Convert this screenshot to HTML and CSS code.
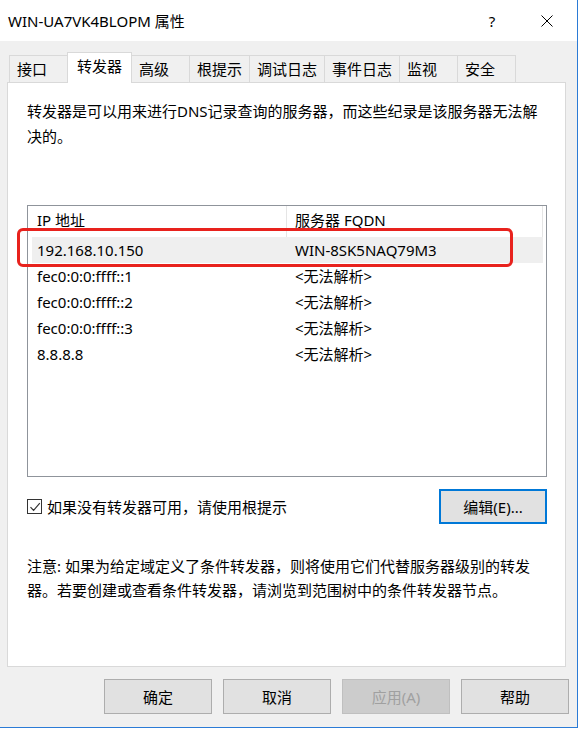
FILE: index.html
```html
<!DOCTYPE html>
<html lang="zh-CN">

<head>
    <meta charset="UTF-8">
    <meta name="viewport" content="width=device-width, initial-scale=1.0">
    <title>WIN-UA7VK4BLOPM 属性</title>
    <link rel="stylesheet" href="styles.css">
</head>

<body>
    <div class="window">
        <div class="titlebar">
            <span class="title">WIN-UA7VK4BLOPM 属性</span>
            <span class="title-help">?</span>
            <span class="title-close">
                <svg width="12" height="12" viewBox="0 0 12 12">
                    <path d="M0.5 0.5 L11.5 11.5 M11.5 0.5 L0.5 11.5" stroke="#000" stroke-width="1" fill="none" />
                </svg>
            </span>
        </div>

        <div class="dialog-body">
            <div class="tabs">
                <div class="tab">接口</div>
                <div class="tab active">转发器</div>
                <div class="tab">高级</div>
                <div class="tab">根提示</div>
                <div class="tab">调试日志</div>
                <div class="tab">事件日志</div>
                <div class="tab">监视</div>
                <div class="tab">安全</div>
            </div>

            <div class="panel">
                <p class="intro">转发器是可以用来进行DNS记录查询的服务器，而这些纪录是该服务器无法解决的。</p>

                <div class="list">
                    <div class="list-head">
                        <div class="col-ip">IP 地址</div>
                        <div class="col-fqdn">服务器 FQDN</div>
                    </div>
                    <div class="row selected">
                        <div class="col-ip">192.168.10.150</div>
                        <div class="col-fqdn">WIN-8SK5NAQ79M3</div>
                    </div>
                    <div class="row">
                        <div class="col-ip">fec0:0:0:ffff::1</div>
                        <div class="col-fqdn">&lt;无法解析&gt;</div>
                    </div>
                    <div class="row">
                        <div class="col-ip">fec0:0:0:ffff::2</div>
                        <div class="col-fqdn">&lt;无法解析&gt;</div>
                    </div>
                    <div class="row">
                        <div class="col-ip">fec0:0:0:ffff::3</div>
                        <div class="col-fqdn">&lt;无法解析&gt;</div>
                    </div>
                    <div class="row">
                        <div class="col-ip">8.8.8.8</div>
                        <div class="col-fqdn">&lt;无法解析&gt;</div>
                    </div>
                    <!-- red annotation box around the first forwarder -->
                    <div class="mark"></div>
                </div>

                <div class="options">
                    <label class="check">
                        <span class="check-box">
                            <svg width="12" height="12" viewBox="0 0 12 12">
                                <path d="M1.5 6.2 L4.6 9.3 L10.8 2.2" stroke="#333" stroke-width="1.2" fill="none" />
                            </svg>
                        </span>
                        如果没有转发器可用，请使用根提示
                    </label>
                    <button class="btn btn-focus">编辑(E)...</button>
                </div>

                <p class="note">注意: 如果为给定域定义了条件转发器，则将使用它们代替服务器级别的转发器。若要创建或查看条件转发器，请浏览到范围树中的条件转发器节点。</p>
            </div>

            <div class="actions">
                <button class="btn">确定</button>
                <button class="btn">取消</button>
                <button class="btn" disabled>应用(A)</button>
                <button class="btn">帮助</button>
            </div>
        </div>
    </div>
</body>

</html>
```

FILE: styles.css
```css
body {
    margin: 0;
    padding: 0;
    background: #fff;
    font-family: 'Noto Sans', 'Noto Sans CJK SC', sans-serif;
    font-size: 15px;
    color: #000;
}

.window {
    width: 577px;
    height: 727px;
    border-right: 1px solid #2b7bd6;
    border-bottom: 1px solid #2b7bd6;
    background: #f0f0f0;
    display: flex;
    flex-direction: column;
}

.titlebar {
    height: 41px;
    background: #fff;
    display: flex;
    align-items: center;
    padding-left: 8px;
    flex-shrink: 0;
}

.title {
    flex: 1;
    font-size: 15px;
    padding-bottom: 1px;
}

.title-help {
    width: 14px;
    margin-right: 42px;
    font-size: 15px;
    text-align: center;
}

.title-close {
    display: flex;
    margin-right: 24px;
}

.dialog-body {
    flex: 1;
    padding: 12px 0 0 7px;
}

/* tab strip */
.tabs {
    display: flex;
    height: 29px;
    align-items: flex-end;
    padding-left: 3px;
    position: relative;
    z-index: 1;
}

.tab {
    min-width: 43px;
    height: 26px;
    padding: 0 7px;
    border: 1px solid #d9d9d9;
    border-bottom: none;
    margin-left: -1px;
    background: #f0f0f0;
    font-size: 15px;
    line-height: 27px;
}

.tab.active {
    height: 30px;
    margin: 0 0 -1px -1px;
    padding: 0 9px;
    background: #fff;
    line-height: 26px;
}

.panel {
    width: 557px;
    height: 583px;
    border: 1px solid #d9d9d9;
    background: #fff;
    box-sizing: content-box;
    padding: 0;
}

.panel>* {
    margin-left: 19px;
    margin-right: 18px;
}

.intro {
    margin-top: 16px;
    margin-bottom: 0;
    line-height: 25px;
}

/* forwarder list */
.list {
    position: relative;
    margin-top: 56px;
    height: 270px;
    border: 1px solid #8f949b;
}

.list-head {
    display: flex;
    height: 31px;
    line-height: 28px;
    margin-right: 3px;
}

.list-head .col-ip {
    border-right: 1px solid #e5e5e5;
}

.list-head .col-fqdn {
    border-right: 1px solid #e5e5e5;
}

.row {
    display: flex;
    height: 26px;
    line-height: 26px;
    margin: 0 3px 0 4px;
}

.row .col-ip {
    width: 250px;
}

.row.selected {
    background: #efefef;
}

.col-ip {
    width: 254px;
    padding-left: 5px;
    flex-shrink: 0;
}

.list-head .col-ip {
    width: 249px;
    padding-left: 9px;
}

.col-fqdn {
    flex: 1;
    padding-left: 8px;
}

.mark {
    position: absolute;
    left: -11px;
    top: 22px;
    width: 490px;
    height: 33px;
    border: 3px solid #e8221d;
    border-radius: 6px;
}

/* checkbox + edit */
.options {
    display: flex;
    justify-content: space-between;
    align-items: center;
    margin-top: 12px;
}

.check {
    display: flex;
    align-items: center;
    gap: 5px;
}

.check-box {
    width: 13px;
    height: 13px;
    border: 1px solid #333;
    display: flex;
    align-items: center;
    justify-content: center;
}

.btn {
    width: 108px;
    height: 35px;
    background: #e1e1e1;
    border: 1px solid #adadad;
    font-family: inherit;
    font-size: 15px;
    color: #000;
    padding: 0;
}

.btn-focus {
    height: 35px;
    border: 2px solid #0078d7;
}

.btn:disabled {
    background: #cccccc;
    border-color: #bfbfbf;
    color: #a0a0a0;
}

.note {
    margin-top: 30px;
    line-height: 24px;
}

/* bottom buttons */
.actions {
    display: flex;
    justify-content: flex-end;
    gap: 11px;
    margin-top: 12px;
    margin-right: 8px;
}
```
